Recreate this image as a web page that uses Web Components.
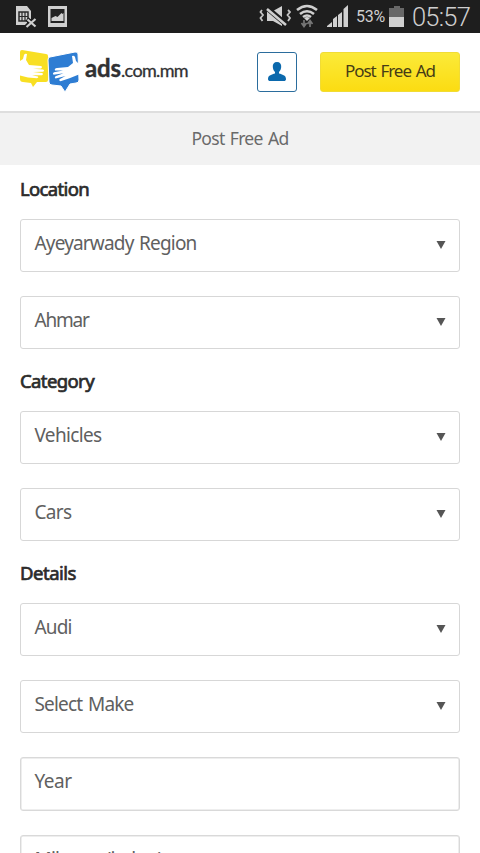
<!DOCTYPE html>
<html lang="en">
<head>
<meta charset="utf-8">
<title>Post Free Ad</title>
<style>
html,body{margin:0;height:853px;overflow:hidden;background:#fff}
body{font-family:"Noto Sans","Open Sans",sans-serif;font-size:19px;color:#606060}
</style>
</head>
<body>
<ad-page></ad-page>
<script>
const define=(name,html,init)=>customElements.define(name,class extends HTMLElement{
  connectedCallback(){
    if(this.shadowRoot)return;
    const t=document.createElement('template');
    t.innerHTML=html;
    this.attachShadow({mode:'open'}).append(t.content.cloneNode(true));
    if(init)init.call(this);
  }
});

/* Text run whose tracking is adjusted to fill the given width. */
define('fit-text','<style>:host{display:inline-block;white-space:nowrap;line-height:26px;word-spacing:1.5px}span{display:inline-block}</style><span><slot></slot></span>',function(){
  const w=parseFloat(this.getAttribute('width')),n=this.textContent.length;
  const s=this.shadowRoot.querySelector('span');
  s.style.letterSpacing=((w-s.getBoundingClientRect().width)/n)+'px';
});

define('status-bar',`<style>
:host{display:flex;height:33px;background:#1e1e1e;color:#cfcfcf;font-family:Roboto,sans-serif;align-items:center;box-sizing:border-box;padding:0 10px 0 15px}
svg{display:block;flex:none}
.sp{flex:1}
fit-text{flex:none}
.clock{font-size:25.5px;font-weight:300;margin-left:8px}
.pct{font-size:16px;margin-left:7px;padding-top:1px}
</style>
<svg width="54" height="33" viewBox="15 0 54 33"><path d="M16 6h11l4 5v8l-4 0v6H16z" fill="#d0d0d0"/><path d="M19 12h9v9h-9z" fill="#d0d0d0" stroke="#292929" stroke-width="1.5"/><path d="M22 12v9M25 12v9M19 16.500h9" fill="none" stroke="#292929" stroke-width="1.200"/><path d="M27 19l8 7M35 18l-9 9" stroke="#1e1e1e" stroke-width="4.500"/><path d="M27.500 19.500l8 7M35.500 19l-9 8" stroke="#d0d0d0" stroke-width="2.200"/><path d="M48 6h19v21H48z" fill="#d0d0d0"/><path d="M50.500 9h14v14h-14z" fill="#222"/><path d="M51.500 21v-3l4-2 2 1 4-4 1 1 1-1v8z" fill="#d0d0d0"/></svg>
<span class="sp"></span>
<svg width="90" height="33" viewBox="259 0 90 33"><path d="M267 11h6l9-5v20l-9-5h-6z" fill="#d0d0d0"/><path d="M267 8l20 17" stroke="#1e1e1e" stroke-width="5.500"/><path d="M267 9l19 16" stroke="#d0d0d0" stroke-width="2.600"/><path d="M262 10l-1.500 2 2.500 3-2.500 3 2 3M288 10l2 2-2.500 3 2.500 3-2 3" fill="none" stroke="#c4c4c4" stroke-width="1.800"/><path d="M297 10q10-8 20 0M300 14q7-5.500 14 0M303 17q4-3 8 0" fill="none" stroke="#d0d0d0" stroke-width="2.600"/><path d="M304 18q3-2 6 0l-3 3z" fill="#d0d0d0"/><path d="M304 20v6M301.500 23l2.500 3.500 2.500-3.500M310 27v-6M307.500 24l2.500-3.500 2.500 3.500" fill="none" stroke="#777" stroke-width="1.700"/><path d="M327 27v-1l5-4v5zM333 27v-8l4-3v11zM338 27v-12l4-3v15zM343.500 27v-18l4.500-4v22z" fill="#d0d0d0"/></svg>
<fit-text class="pct" width="29">53%</fit-text>
<svg width="15" height="33" viewBox="0 0 15 33" style="margin-left:4px"><path d="M0 8h5V6h6v2h4v9H0z" fill="#686868"/><path d="M0 17h15v10H0z" fill="#d0d0d0"/></svg>
<fit-text class="clock" width="58">05:57</fit-text>`);

define('site-logo',`<style>
:host{display:flex;width:170px;height:44px}
svg{display:block;flex:none}
.word{display:flex;align-items:baseline;color:#303133;font-family:Lato,sans-serif;padding-top:7px;margin-left:5px;height:28px}
.a{font-weight:700;font-size:24px;-webkit-text-stroke:.4px #303133}.b{font-size:18px;-webkit-text-stroke:.3px #303133}
</style>
<svg width="60" height="46" viewBox="20 48 60 46">
<path d="M22 50l24 4q2 0 2 2v24q0 2-2 2l-9 0-4 5-2-4-8-1q-3 0-3-3V52q0-2 2-2z" fill="#f8df23"/>
<path d="M20 61l3-2 1-4q1-2 3-1l-1 6 3 5 12 1q2 1 0 2.400l-8 .4 10 .6q2 1 0 2.300l-10 .4 9 1q2 1 0 2.200l-10 0 6 1.200q1 1.200-1 1.800l-9-.8-8-2z" fill="#fff"/>
<path d="M50 57l25-5q3-.5 3 2l1 26q0 3-3 3l-6 1-5 8-4-6-9-1q-3 0-3-3l-1-22q0-3 2-3z" fill="#2e7dd3" stroke="#fff" stroke-width="1"/>
<path d="M79 64l-3-3-1-4q-1-2-3-1l1 7-5 4-11 1q-3 .5-2 2.500l8 0-9 1.800q-2 1-.5 2.400l10-1.400-8 3q-1.500 1.200 0 2.300l10-2.600-6 3.200q-1 1.500 1 2l9-3 10-4z" fill="#fff"/>
</svg>
<div class="word"><fit-text class="a" width="36">ads</fit-text><fit-text class="b" width="67">.com.mm</fit-text></div>`);

define('user-button',`<style>
:host{display:flex;box-sizing:border-box;width:40px;height:40px;border:1.500px solid #2b6d9d;border-radius:3px;align-items:center;justify-content:center;background:#fff}
svg{display:block;margin-bottom:2px}
</style><svg width="18" height="19" viewBox="0 0 18 19"><path d="M9 0c3 0 4.500 2 4.200 5-.2 2-1 4-2.200 5v1.500c3 1 7 1.500 7 5.500 0 1.500-1 2-2 2H2c-1 0-2-.5-2-2 0-4 4-4.500 7-5.500V10C5.800 9 5 7 4.800 5 4.500 2 6 0 9 0z" fill="#0b69ad"/></svg>`);

define('post-button',`<style>
:host{display:flex;box-sizing:border-box;width:140px;height:40px;border:1px solid #f1dc35;border-radius:3px;background:linear-gradient(#fbea39,#fbdc12);align-items:center;justify-content:center;color:#463c16;font-size:17px;padding-bottom:2px}
</style><slot></slot>`);

define('site-header',`<style>
:host{display:flex;box-sizing:border-box;height:80px;border-bottom:2px solid #dedede;background:#fff;padding:15px 20px 0}
user-button{margin:4px 23px 0 auto}post-button{margin-top:4px}
</style><site-logo></site-logo><user-button></user-button><post-button><fit-text width="90">Post Free Ad</fit-text></post-button>`);

define('page-title',`<style>
:host{display:flex;box-sizing:border-box;height:52px;background:#f2f2f2;align-items:center;justify-content:center;color:#6a6a6a;font-size:17.500px;padding-bottom:3px}
</style><slot></slot>`);

define('form-section',`<style>
:host{display:grid;grid-template-rows:54px;padding:0 20px 8px}
h2{margin:0;padding-top:11px;font-size:18.500px;font-weight:400;color:#2b2b2b;-webkit-text-stroke:.7px #2b2b2b;line-height:26px}
.fields{display:grid;gap:24px}
</style><h2><slot name="title"></slot></h2><div class="fields"><slot></slot></div>`);

define('form-field',`<style>
:host{display:flex;box-sizing:border-box;height:53px;border:1px solid #d7d7d7;border-radius:3px;padding:0 13px 6px 13.500px;align-items:center;justify-content:space-between;background:#fff}
:host([plain]){height:54px;border-color:#d9d9d9;box-shadow:inset 0 0 0 .5px #ddd}
svg{display:block;margin-top:4px}
:host([plain]) svg{display:none}
</style><slot></slot><svg width="10" height="8" viewBox="0 0 10 8"><path d="M.5 0h9L5 8z" fill="#555"/></svg>`);

define('ad-page',`<style>:host{display:block;width:480px;height:853px;overflow:hidden}</style>
<status-bar></status-bar>
<site-header></site-header>
<page-title><fit-text width="97">Post Free Ad</fit-text></page-title>
<form-section><fit-text slot="title" width="69">Location</fit-text>
<form-field><fit-text width="162">Ayeyarwady Region</fit-text></form-field>
<form-field><fit-text width="54">Ahmar</fit-text></form-field></form-section>
<form-section><fit-text slot="title" width="74">Category</fit-text>
<form-field><fit-text width="67">Vehicles</fit-text></form-field>
<form-field><fit-text width="37">Cars</fit-text></form-field></form-section>
<form-section><fit-text slot="title" width="56">Details</fit-text>
<form-field><fit-text width="37">Audi</fit-text></form-field>
<form-field><fit-text width="99">Select Make</fit-text></form-field>
<form-field plain><fit-text width="37">Year</fit-text></form-field>
<form-field plain><fit-text width="128">Mileage (in km)</fit-text></form-field></form-section>`);
</script>
</body>
</html>
